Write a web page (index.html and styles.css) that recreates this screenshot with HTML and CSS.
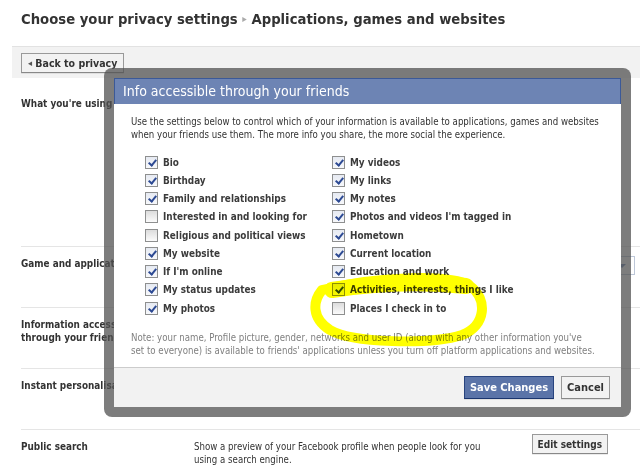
FILE: index.html
```html
<!DOCTYPE html>
<html lang="en">
<head>
    <meta charset="UTF-8">
    <title>Applications, games and websites</title>
    <link rel="stylesheet" href="styles.css">
</head>
<body>
    <h1 class="crumbs">Choose your privacy settings <span class="crumb-sep">&#9656;</span> Applications, games and websites</h1>

    <div class="toolbar">
        <button class="btn back"><span class="back-arrow">&#9666;</span> Back to privacy</button>
    </div>

    <div class="sections">
        <div class="row row-first">
            <div class="row-label">What you're using</div>
        </div>
        <div class="row">
            <div class="row-label">Game and application activity</div>
            <div class="row-desc"></div>
            <div class="fake-select"><span class="select-arrow"></span></div>
        </div>
        <div class="row">
            <div class="row-label">Information accessible through your friends</div>
        </div>
        <div class="row">
            <div class="row-label">Instant personalisation</div>
        </div>
        <div class="row">
            <div class="row-label">Public search</div>
            <div class="row-desc">Show a preview of your Facebook profile when people look for you using a search engine.</div>
            <button class="btn edit">Edit settings</button>
        </div>
    </div>

    <div class="dialog">
        <div class="dialog-inner">
            <div class="dialog-title">Info accessible through your friends</div>
            <div class="dialog-body">
                <p class="intro">Use the settings below to control which of your information is available to applications, games and websites when your friends use them. The more info you share, the more social the experience.</p>
                <div class="checks">
                    <ul class="check-col">
                        <li><span class="box on"></span>Bio</li>
                        <li><span class="box on"></span>Birthday</li>
                        <li><span class="box on"></span>Family and relationships</li>
                        <li><span class="box"></span>Interested in and looking for</li>
                        <li><span class="box"></span>Religious and political views</li>
                        <li><span class="box on"></span>My website</li>
                        <li><span class="box on"></span>If I'm online</li>
                        <li><span class="box on"></span>My status updates</li>
                        <li><span class="box on"></span>My photos</li>
                    </ul>
                    <ul class="check-col">
                        <li><span class="box on"></span>My videos</li>
                        <li><span class="box on"></span>My links</li>
                        <li><span class="box on"></span>My notes</li>
                        <li><span class="box on"></span>Photos and videos I'm tagged in</li>
                        <li><span class="box on"></span>Hometown</li>
                        <li><span class="box on"></span>Current location</li>
                        <li><span class="box on"></span>Education and work</li>
                        <li><span class="box on"></span>Activities, interests, things I like</li>
                        <li><span class="box"></span>Places I check in to</li>
                    </ul>
                </div>
                <p class="note">Note: your name, Profile picture, gender, networks and user ID (along with any other information you've<br>set to everyone) is available to friends' applications unless you turn off platform applications and websites.</p>
            </div>
            <div class="dialog-footer">
                <button class="btn primary">Save Changes</button>
                <button class="btn">Cancel</button>
            </div>
        </div>
    </div>

    <!-- marker scribble drawn over the screenshot -->
    <svg class="scribble" width="640" height="473" viewBox="0 0 640 473">
        <path d="M332 290 Q400 279 466 286" fill="none" stroke="#ffff00" stroke-width="16" stroke-linecap="round"/>
        <path d="M322 290 C313 301 311 318 330 330 C352 343 430 345 462 335 C486 326 488 299 470 286 C450 274 380 276 322 290 Z" fill="none" stroke="#ffff00" stroke-width="10" stroke-linejoin="round"/>
    </svg>
</body>
</html>
```

FILE: styles.css
```css
body {
    margin: 0;
    background: #fff;
    color: #333;
    font-family: "DejaVu Sans", Tahoma, sans-serif;
    font-stretch: semi-condensed;
    font-size: 9.6px;
    position: relative;
    width: 640px;
    height: 473px;
    overflow: hidden;
}
.crumbs {
    margin: 0;
    padding: 10px 0 0 21px;
    height: 36px;
    box-sizing: border-box;
    font-size: 14.7px;
    font-weight: bold;
    color: #333;
}
.crumb-sep {
    color: #aaa;
    font-size: 10px;
    position: relative;
    top: -2px;
}
.toolbar {
    margin: 10px 0 0 12px;
    height: 32px;
    box-sizing: border-box;
    background: #f2f2f2;
    border-top: 1px solid #e2e2e2;
    padding: 6px 9px;
}
.btn {
    font-family: inherit;
    font-stretch: semi-condensed;
    font-size: 10.5px;
    font-weight: bold;
    color: #333;
    background: #f2f2f2;
    border: 1px solid #999;
    border-bottom-color: #888;
    box-shadow: 0 1px 0 rgba(0, 0, 0, 0.08);
    padding: 0 6px;
    height: 20px;
    cursor: pointer;
}
.back-arrow {
    font-size: 9px;
    color: #555;
    position: relative;
    top: -1px;
}
.sections {
    margin-left: 21px;
}
.row {
    display: flex;
    align-items: flex-start;
    height: 61px;
    box-sizing: border-box;
    border-top: 1px solid #e5e5e5;
    padding-top: 10px;
}
.row-first {
    border-top: none;
    height: 168px;
    padding-top: 19px;
}
.row-label {
    width: 150px;
    flex: none;
    font-size: 9.9px;
    font-weight: bold;
    line-height: 13px;
}
.row-desc {
    margin-left: 23px;
    width: 300px;
    line-height: 13px;
}
.fake-select {
    margin: 0 5px 0 auto;
    width: 70px;
    height: 19px;
    box-sizing: border-box;
    border: 1px solid #bdc7d8;
    position: relative;
    top: -1px;
}
.select-arrow {
    position: absolute;
    right: 8px;
    top: 7px;
    border: 4px solid transparent;
    border-top-color: #6d84b4;
}
.btn.edit {
    margin: -6px 32px 0 auto;
    font-size: 10px;
    padding: 0 5px;
}
.dialog {
    position: absolute;
    left: 104px;
    top: 68px;
    width: 527px;
    height: 349px;
    box-sizing: border-box;
    padding: 10px;
    border-radius: 8px;
    background: rgba(82, 82, 82, 0.75);
}
.dialog-inner {
    background: #fff;
    height: 100%;
    display: flex;
    flex-direction: column;
}
.dialog-title {
    height: 26px;
    flex: none;
    box-sizing: border-box;
    background: #6d84b4;
    border: 1px solid #3b5998;
    border-bottom: none;
    color: #fff;
    font-size: 14px;
    line-height: 25px;
    padding-left: 8px;
}
.dialog-body {
    flex: 1;
    overflow: hidden;
    padding: 11px 17px 0 17px;
}
.intro {
    margin: 0;
    line-height: 13px;
}
.checks {
    display: flex;
    margin: 12px 0 0 14px;
}
.check-col {
    list-style: none;
    margin: 0;
    padding: 0;
    width: 187px;
}
.check-col li {
    height: 18.25px;
    display: flex;
    align-items: center;
    font-size: 9.9px;
    font-weight: bold;
    color: #3b3b3b;
}
.box {
    width: 11px;
    height: 11px;
    border: 1px solid #8e8f8f;
    background: linear-gradient(#dcdcdc, #fbfbfb);
    margin-right: 5px;
    position: relative;
    flex: none;
}
.box.on {
    background: linear-gradient(#e6eaf2, #f7f8fb);
}
.box.on::after {
    content: "";
    position: absolute;
    left: 4px;
    top: 1px;
    width: 3px;
    height: 6px;
    border: solid #2d4a93;
    border-width: 0 2px 2px 0;
    transform: rotate(40deg);
}
.note {
    margin: 14px 0 0 0;
    white-space: nowrap;
    color: #808080;
    line-height: 13px;
}
.dialog-footer {
    height: 40px;
    flex: none;
    box-sizing: border-box;
    background: #f2f2f2;
    border-top: 1px solid #ccc;
    display: flex;
    justify-content: flex-end;
    align-items: flex-start;
    padding: 8px 11px 0 0;
    gap: 7px;
}
.dialog-footer .btn {
    height: 23px;
    font-size: 11px;
    padding: 0 5px;
}
.btn.primary {
    background: #5b74a8;
    border-color: #29447e #29447e #1a356e;
    color: #fff;
}
.scribble {
    position: absolute;
    left: 0;
    top: 0;
    pointer-events: none;
    mix-blend-mode: multiply;
}
```
